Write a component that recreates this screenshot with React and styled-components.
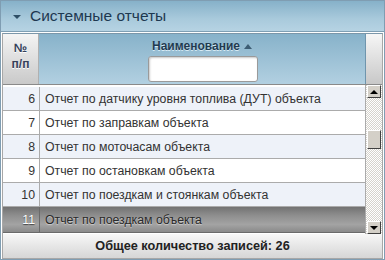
import styled, { createGlobalStyle } from "styled-components";

const GlobalStyle = createGlobalStyle`
  body {
    margin: 0;
    background: #fff;
    font-family: "Liberation Sans", Arial, sans-serif;
  }
`;

const reports = [
  { n: 6, name: "Отчет по датчику уровня топлива (ДУТ) объекта" },
  { n: 7, name: "Отчет по заправкам объекта" },
  { n: 8, name: "Отчет по моточасам объекта" },
  { n: 9, name: "Отчет по остановкам объекта" },
  { n: 10, name: "Отчет по поездкам и стоянкам объекта" },
  { n: 11, name: "Отчет по поездкам объекта", selected: true },
];

export default function App() {
  return (
    <>
      <GlobalStyle />
      <Panel>
        <PanelHeader>
          <Caret />
          <PanelTitle>Системные отчеты</PanelTitle>
        </PanelHeader>
        <Grid>
          <HeadRow>
            <NumHead>№<br />п/п</NumHead>
            <NameHead>
              <SortTitle>
                Наименование <SortArrow />
              </SortTitle>
              <Filter type="text" />
            </NameHead>
            <ScrollHead />
          </HeadRow>
          <BodyRow>
            <Rows>
              {reports.map((r, i) => (
                <Row key={r.n} alt={i % 2 === 0} selected={r.selected}>
                  <NumCell selected={r.selected}>{r.n}</NumCell>
                  <NameCell selected={r.selected}>{r.name}</NameCell>
                </Row>
              ))}
            </Rows>
            <Scrollbar>
              <ScrollBtn><Tri up /></ScrollBtn>
              <Track>
                <Thumb />
              </Track>
              <ScrollBtn><Tri /></ScrollBtn>
            </Scrollbar>
          </BodyRow>
          <Footer>Общее количество записей: 26</Footer>
        </Grid>
      </Panel>
    </>
  );
}

const Panel = styled.div`
  width: 385px;
  height: 260px;
  box-sizing: border-box;
  border: 1px solid #7f9db2;
  display: flex;
  flex-direction: column;
  background: #fff;
`;

const PanelHeader = styled.div`
  height: 30px;
  display: flex;
  align-items: center;
  background: linear-gradient(#86b1c9, #a9cadc 60%, #b6d3e3);
  border-bottom: 1px solid #7f9fb4;
  padding-left: 12px;
  gap: 9px;
`;

const Caret = styled.span`
  width: 0;
  height: 0;
  border-left: 4px solid transparent;
  border-right: 4px solid transparent;
  border-top: 4px solid #2f4f66;
  margin-top: 1px;
`;

const PanelTitle = styled.span`
  font-size: 15.5px;
  color: #1d3850;
`;

const Grid = styled.div`
  flex: 1;
  margin: 1px 1px 0 1px;
  border: 1px solid #a7a7a7;
  border-top-color: #7b97aa;
  display: flex;
  flex-direction: column;
  min-height: 0;
`;

const HeadRow = styled.div`
  display: flex;
  height: 50px;
  border-bottom: 1px solid #8a8a8a;
`;

const NumHead = styled.div`
  width: 36px;
  border-right: 1px solid #b0b0b0;
  background: linear-gradient(#f4f4f4, #c9c9c9);
  display: flex;
  align-items: flex-start;
  justify-content: center;
  padding-top: 6px;
  box-sizing: border-box;
  text-align: center;
  font-size: 12px;
  font-weight: bold;
  line-height: 16px;
  color: #35405a;
  text-shadow: 0 1px 0 #fff;
`;

const NameHead = styled.div`
  flex: 1;
  border-right: 1px solid #6f95ad;
  background: linear-gradient(#87b2ca, #b2d0e1);
  display: flex;
  flex-direction: column;
  align-items: center;
  padding-top: 5px;
  gap: 3px;
`;

const SortTitle = styled.div`
  font-size: 12px;
  font-weight: bold;
  color: #1f3a50;
  text-shadow: 0 1px 0 #d8ebf5;
  display: flex;
  align-items: center;
  gap: 4px;
`;

const SortArrow = styled.span`
  width: 0;
  height: 0;
  border-left: 4px solid transparent;
  border-right: 4px solid transparent;
  border-bottom: 5px solid #3d5d74;
`;

const Filter = styled.input`
  width: 110px;
  height: 26px;
  box-sizing: border-box;
  border: 1px solid #9a9a9a;
  border-radius: 3px;
  box-shadow: inset 1px 1px 2px #c8c8c8;
  background: #fff;
  margin-left: 2px;
`;

const ScrollHead = styled.div`
  width: 16px;
  background: linear-gradient(#f6f6f6, #c8c8c8);
`;

const BodyRow = styled.div`
  flex: 1;
  display: flex;
  min-height: 0;
`;

const Rows = styled.div`
  flex: 1;
  display: flex;
  flex-direction: column;
  padding-top: 2px;
  overflow: hidden;
  border-right: 1px solid #ababab;
`;

const Row = styled.div`
  display: flex;
  flex-shrink: 0;
  height: 23px;
  border-bottom: 1px solid #ababab;
  font-size: 12.3px;
  color: ${(p) => (p.selected ? "#2a2a2a" : "#333")};
  background: ${(p) =>
    p.selected
      ? "linear-gradient(#727272, #8f8f8f 35%, #a3a3a3 70%, #8a8a8a)"
      : p.alt
      ? "#eef2f9"
      : "#fff"};
  &:last-child {
    height: 25px;
    border-bottom-color: #6a6a6a;
  }
`;

const NumCell = styled.div`
  width: 32px;
  padding-right: 4px;
  border-right: 1px solid ${(p) => (p.selected ? "#6a6a6a" : "#ababab")};
  display: flex;
  align-items: center;
  justify-content: flex-end;
  color: ${(p) => (p.selected ? "#fff" : "#333")};
  text-shadow: ${(p) => (p.selected ? "0 1px 1px #444" : "none")};
`;

const NameCell = styled.div`
  flex: 1;
  display: flex;
  align-items: center;
  padding-left: 5px;
  white-space: nowrap;
  text-shadow: ${(p) => (p.selected ? "0 1px 1px #cfcfcf" : "none")};
`;

const Scrollbar = styled.div`
  width: 16px;
  display: flex;
  flex-direction: column;
  background: repeating-conic-gradient(#ffffff 0 25%, #d6d3cc 0 50%) 0 0 / 2px 2px;
`;

const ScrollBtn = styled.div`
  height: 13px;
  box-sizing: border-box;
  margin: 0 1px;
  background: #d4d0c8;
  border: 1px solid;
  border-color: #fff #404040 #404040 #fff;
  display: flex;
  align-items: center;
  justify-content: center;
`;

const Tri = styled.span`
  width: 0;
  height: 0;
  border-left: 4px solid transparent;
  border-right: 4px solid transparent;
  ${(p) => (p.up ? "border-bottom: 4px solid #000;" : "border-top: 4px solid #000;")}
`;

const Track = styled.div`
  flex: 1;
  padding-top: 32px;
`;

const Thumb = styled.div`
  height: 19px;
  margin: 0 1px;
  box-sizing: border-box;
  background: #d4d0c8;
  border: 1px solid;
  border-color: #fff #404040 #404040 #fff;
`;

const Footer = styled.div`
  height: 24px;
  display: flex;
  align-items: center;
  justify-content: center;
  background: linear-gradient(#f7f7f7, #d6d6d6);
  font-size: 12.7px;
  font-weight: bold;
  color: #222;
`;
